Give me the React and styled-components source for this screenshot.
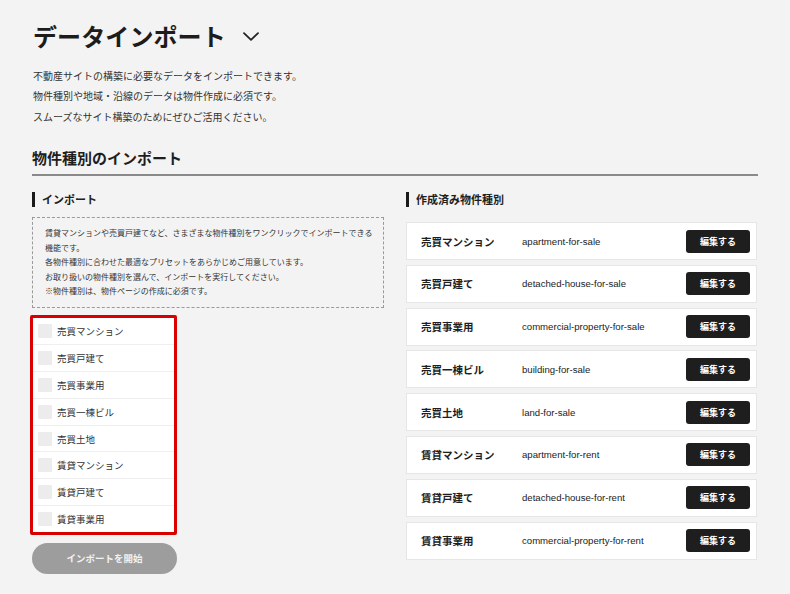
import React from "react";
import styled, { createGlobalStyle } from "styled-components";

const GlobalStyle = createGlobalStyle`
  html, body { margin: 0; padding: 0; background: #f3f3f3; }
  body {
    font-family: "Helvetica Neue", "Liberation Sans", "Noto Sans CJK JP", sans-serif;
    color: #222;
  }
  * { box-sizing: border-box; }
`;

const Page = styled.div`
  width: 790px;
  min-height: 594px;
  padding: 18px 32px 0 33px;
`;

const TitleRow = styled.div`
  display: flex;
  align-items: center;
  gap: 17px;
  height: 36px;
`;

const Title = styled.h1`
  margin: 0;
  font-size: 24px;
  line-height: 36px;
  font-weight: 700;
  letter-spacing: 0.1px;
  color: #1c1c1c;
  font-family: "Noto Sans CJK JP", sans-serif;
`;

const Description = styled.div`
  margin-top: 11.75px;
  font-size: 10px;
  line-height: 20.5px;
  color: #333;
  font-family: "Noto Sans CJK JP", sans-serif;
`;

const SectionTitle = styled.h2`
  margin: 19.75px 0 0 -1px;
  font-size: 15px;
  line-height: 22px;
  font-weight: 700;
  padding-bottom: 5px;
  border-bottom: 2px solid #8a8a8a;
  color: #1e1e1e;
  font-family: "Noto Sans CJK JP", sans-serif;
`;

const Columns = styled.div`
  display: grid;
  grid-template-columns: 352px 351px;
  column-gap: 22px;
  margin-left: -1px;
`;

const Column = styled.div`
  display: flex;
  flex-direction: column;
`;

const ColumnHeading = styled.h3`
  margin: 16px 0 0;
  font-size: 11px;
  line-height: 15px;
  font-weight: 700;
  border-left: 3px solid #1a1a1a;
  padding-left: 7px;
  color: #1e1e1e;
  font-family: "Noto Sans CJK JP", sans-serif;
`;

const Notice = styled.div`
  margin-top: 10px;
  border: 1px dashed #9a9a9a;
  padding: 8px 6px 8px 12px;
  font-size: 8px;
  line-height: 14.5px;
  color: #333;
  white-space: nowrap;
  font-family: "Noto Sans CJK JP", sans-serif;
`;

const CheckList = styled.ul`
  list-style: none;
  margin: 7px 0 0 -2.5px;
  padding: 0;
  width: 147.5px;
  border: 3px solid #d90000;
  border-radius: 2px;
  background: #fff;
`;

const CheckItem = styled.li`
  display: flex;
  align-items: center;
  gap: 5px;
  height: 26.8px;
  padding-left: 5.5px;
  border-top: ${(p) => (p.$first ? "none" : "1px solid #efefef")};
  font-size: 9.5px;
  color: #333;
  font-family: "Noto Sans CJK JP", sans-serif;
`;

const CheckBox = styled.span`
  width: 14px;
  height: 14px;
  background: #ececec;
  border-radius: 1px;
  flex: none;
`;

const StartButton = styled.button`
  margin-top: 8px;
  width: 145px;
  height: 31px;
  border: none;
  border-radius: 16px;
  background: #9d9d9d;
  color: #f2f2f2;
  font-size: 9.5px;
  font-weight: 700;
  font-family: "Noto Sans CJK JP", sans-serif;
  padding: 0;
`;

const CardList = styled.div`
  display: flex;
  flex-direction: column;
  gap: 4.8px;
  margin-top: 15px;
`;

const Card = styled.div`
  display: flex;
  align-items: center;
  height: 38px;
  background: #fff;
  border: 1px solid #e6e6e6;
  padding: 0 6px 0 14px;
`;

const CardName = styled.span`
  width: 101px;
  flex: none;
  font-size: 10.5px;
  font-weight: 700;
  color: #1e1e1e;
  font-family: "Noto Sans CJK JP", sans-serif;
`;

const CardSlug = styled.span`
  flex: 1;
  font-size: 9.6px;
  color: #222;
  font-family: "Liberation Sans", Arial, sans-serif;
`;

const EditButton = styled.button`
  width: 64px;
  height: 23px;
  border: none;
  border-radius: 3px;
  background: #1e1e1e;
  color: #fff;
  font-size: 9px;
  font-weight: 700;
  padding: 0;
  font-family: "Noto Sans CJK JP", sans-serif;
`;

const Chevron = () => (
  <svg width="16" height="9" viewBox="0 0 16 9" fill="none">
    <path d="M1 1.2 L8 7.8 L15 1.2" stroke="#222" strokeWidth="1.8" strokeLinecap="round" strokeLinejoin="round" />
  </svg>
);

const checkItems = [
  "売買マンション",
  "売買戸建て",
  "売買事業用",
  "売買一棟ビル",
  "売買土地",
  "賃貸マンション",
  "賃貸戸建て",
  "賃貸事業用",
];

const created = [
  ["売買マンション", "apartment-for-sale"],
  ["売買戸建て", "detached-house-for-sale"],
  ["売買事業用", "commercial-property-for-sale"],
  ["売買一棟ビル", "building-for-sale"],
  ["売買土地", "land-for-sale"],
  ["賃貸マンション", "apartment-for-rent"],
  ["賃貸戸建て", "detached-house-for-rent"],
  ["賃貸事業用", "commercial-property-for-rent"],
];

export default function App() {
  return (
    <>
      <GlobalStyle />
      <Page>
        <TitleRow>
          <Title>データインポート</Title>
          <Chevron />
        </TitleRow>
        <Description>
          不動産サイトの構築に必要なデータをインポートできます。
          <br />
          物件種別や地域・沿線のデータは物件作成に必須です。
          <br />
          スムーズなサイト構築のためにぜひご活用ください。
        </Description>
        <SectionTitle>物件種別のインポート</SectionTitle>
        <Columns>
          <Column>
            <ColumnHeading>インポート</ColumnHeading>
            <Notice>
              賃貸マンションや売買戸建てなど、さまざまな物件種別をワンクリックでインポートできる
              <br />
              機能です。
              <br />
              各物件種別に合わせた最適なプリセットをあらかじめご用意しています。
              <br />
              お取り扱いの物件種別を選んで、インポートを実行してください。
              <br />
              ※物件種別は、物件ページの作成に必須です。
            </Notice>
            <CheckList>
              {checkItems.map((label, i) => (
                <CheckItem key={label} $first={i === 0}>
                  <CheckBox />
                  {label}
                </CheckItem>
              ))}
            </CheckList>
            <StartButton>インポートを開始</StartButton>
          </Column>
          <Column>
            <ColumnHeading>作成済み物件種別</ColumnHeading>
            <CardList>
              {created.map(([name, slug]) => (
                <Card key={slug}>
                  <CardName>{name}</CardName>
                  <CardSlug>{slug}</CardSlug>
                  <EditButton>編集する</EditButton>
                </Card>
              ))}
            </CardList>
          </Column>
        </Columns>
      </Page>
    </>
  );
}
